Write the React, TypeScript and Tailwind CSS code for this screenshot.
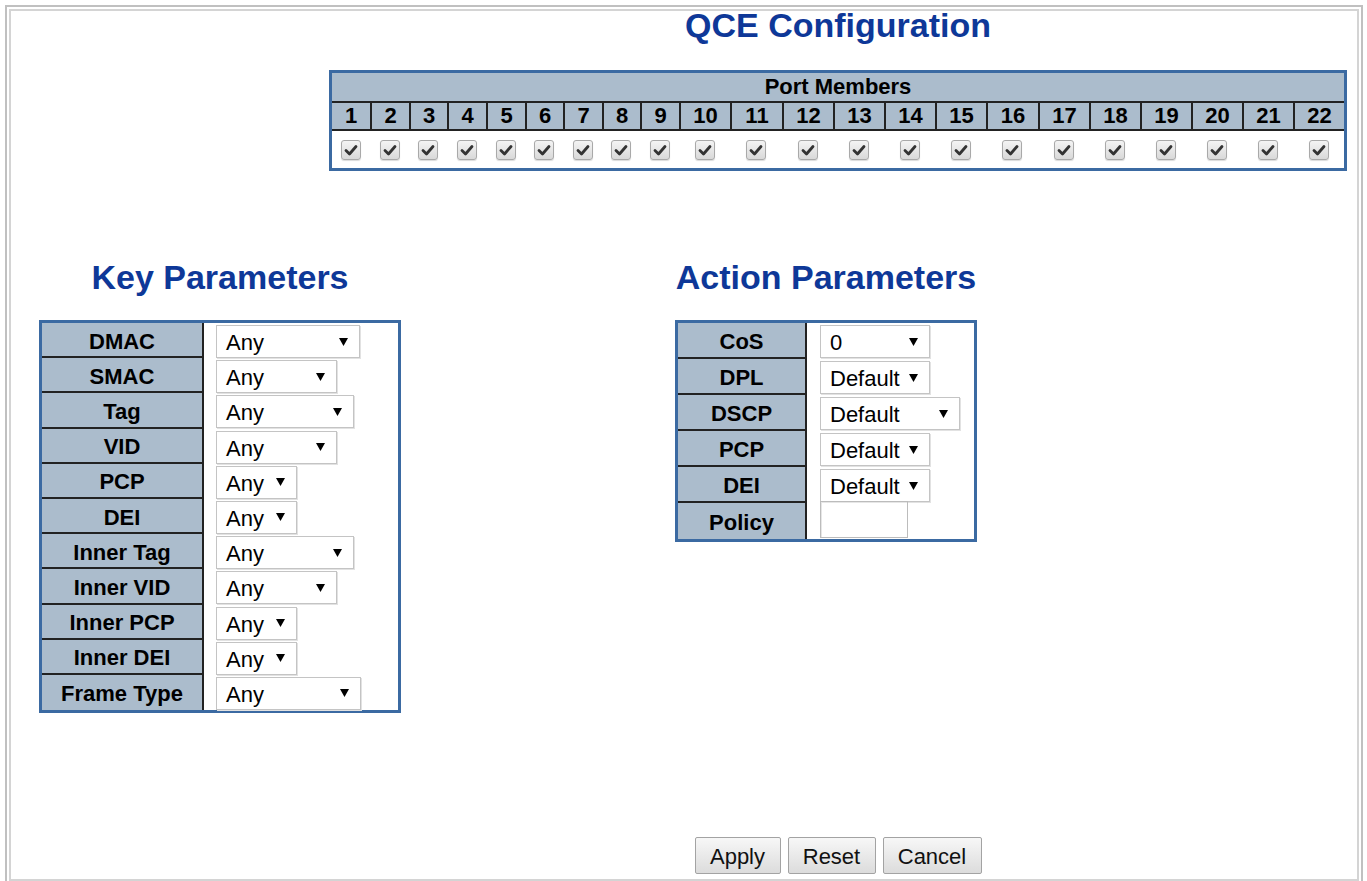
import React from "react";

const ports = Array.from({ length: 22 }, (_, i) => i + 1);

const keyRows: { label: string; w: string }[] = [
  { label: "DMAC", w: "w-[144px]" },
  { label: "SMAC", w: "w-[121px]" },
  { label: "Tag", w: "w-[138px]" },
  { label: "VID", w: "w-[121px]" },
  { label: "PCP", w: "w-[81px]" },
  { label: "DEI", w: "w-[81px]" },
  { label: "Inner Tag", w: "w-[138px]" },
  { label: "Inner VID", w: "w-[121px]" },
  { label: "Inner PCP", w: "w-[81px]" },
  { label: "Inner DEI", w: "w-[81px]" },
  { label: "Frame Type", w: "w-[145px]" },
];

const actionRows: { label: string; value: string; w: string }[] = [
  { label: "CoS", value: "0", w: "w-[110px]" },
  { label: "DPL", value: "Default", w: "w-[110px]" },
  { label: "DSCP", value: "Default", w: "w-[140px]" },
  { label: "PCP", value: "Default", w: "w-[110px]" },
  { label: "DEI", value: "Default", w: "w-[110px]" },
];

function Arrow() {
  return (
    <svg width="9" height="8" viewBox="0 0 9 8" className="shrink-0">
      <path d="M0 0 H9 L4.5 8 Z" fill="#000" />
    </svg>
  );
}

function Select({ value, w }: { value: string; w: string }) {
  return (
    <div
      className={`${w} h-[33px] mt-[2px] flex items-center justify-between pl-[9px] pr-[11px] pt-[3px] border border-[#c4c4c4] bg-white shadow-[1px_1px_0_#e2e2e2] text-[22px] text-black leading-none`}
    >
      <span>{value}</span>
      <span className="-mt-[3px]">
        <Arrow />
      </span>
    </div>
  );
}

function CheckBox() {
  return (
    <div className="w-[20px] h-[20px] rounded-[3px] border border-[#a9a9a9] bg-gradient-to-b from-[#f4f4f4] to-[#d9d9d9] flex items-center justify-center shadow-[0_1px_1px_rgba(0,0,0,0.15)]">
      <svg width="14" height="12" viewBox="0 0 14 12">
        <path d="M2 6.5 L5.5 10 L12 2.5" fill="none" stroke="#333" strokeWidth="2.8" strokeLinecap="round" strokeLinejoin="round" />
      </svg>
    </div>
  );
}

export default function App() {
  return (
    <div className="pt-[5px] pl-[5px] font-['Liberation_Sans',Arial,sans-serif] text-black">
      <div className="w-[1358px] h-[876px] border-[2px] border-b-0 border-[#c0c0c0] pt-[2px] px-[2px]">
        <div className="h-[872px] border-2 border-[#d4d4d4] bg-white flex flex-col">
          {/* Centered column (centre at x=838) */}
          <div className="pl-[308px] flex flex-col">
            <h1 className="self-center -mt-[5px] text-[34px] font-bold leading-[38px] text-[#0e3898] whitespace-nowrap">
              QCE Configuration
            </h1>

            {/* Port members */}
            <div className="self-center mt-[26px] w-[1018px] border-[3px] border-[#3b6aa2]">
              <div className="h-[28px] bg-[#abbccc] flex items-center justify-center text-[22px] font-bold leading-none">
                Port Members
              </div>
              <div className="grid grid-cols-[38px_39px_38px_39px_39px_38px_39px_38px_39px_51px_52px_51px_51px_51px_51px_52px_51px_51px_51px_51px_51px_51px_51px] h-[30px] border-y-2 border-[#222] bg-[#abbccc]">
                {ports.map((p) => (
                  <div
                    key={p}
                    className={`flex items-center justify-center text-[22px] font-bold leading-none ${p > 1 ? "border-l-2 border-[#222]" : ""}`}
                  >
                    {p}
                  </div>
                ))}
              </div>
              <div className="grid grid-cols-[38px_39px_38px_39px_39px_38px_39px_38px_39px_51px_52px_51px_51px_51px_51px_52px_51px_51px_51px_51px_51px_51px_51px] h-[37px] bg-white">
                {ports.map((p) => (
                  <div key={p} className="flex items-center justify-center">
                    <CheckBox />
                  </div>
                ))}
              </div>
            </div>
          </div>

          {/* Parameters */}
          <div className="mt-[87px] ml-[28px] flex items-start gap-[274px]">
            {/* Key */}
            <div className="w-[362px] flex flex-col">
              <h2 className="self-center text-[34px] font-bold leading-[38px] text-[#0e3898] whitespace-nowrap">
                Key Parameters
              </h2>
              <div className="mt-[24px] border-[3px] border-[#3b6aa2] flex flex-col">
                {keyRows.map((r, i) => (
                  <div key={r.label} className="flex h-[35.2px]">
                    <div
                      className={`w-[162px] shrink-0 bg-[#abbccc] border-r-2 border-[#222] flex items-center justify-center pt-[4px] text-[22px] font-bold leading-none ${i < keyRows.length - 1 ? "border-b-2" : ""}`}
                    >
                      {r.label}
                    </div>
                    <div className="pl-[12px]">
                      <Select value="Any" w={r.w} />
                    </div>
                  </div>
                ))}
              </div>
            </div>

            {/* Action */}
            <div className="w-[302px] flex flex-col">
              <h2 className="self-center text-[34px] font-bold leading-[38px] text-[#0e3898] whitespace-nowrap">
                Action Parameters
              </h2>
              <div className="mt-[24px] border-[3px] border-[#3b6aa2] flex flex-col">
                {actionRows.map((r) => (
                  <div key={r.label} className="flex h-[36px]">
                    <div className="w-[129px] shrink-0 bg-[#abbccc] border-r-2 border-b-2 border-[#222] flex items-center justify-center pt-[4px] text-[22px] font-bold leading-none">
                      {r.label}
                    </div>
                    <div className="pl-[13px]">
                      <Select value={r.value} w={r.w} />
                    </div>
                  </div>
                ))}
                <div className="flex h-[36px]">
                  <div className="w-[129px] shrink-0 bg-[#abbccc] border-r-2 border-[#222] flex items-center justify-center pt-[4px] text-[22px] font-bold leading-none">
                    Policy
                  </div>
                  <div className="pl-[13px]">
                    <div className="w-[88px] h-[37px] -mt-[2px] border border-[#bcbcbc] bg-white shadow-[inset_1px_1px_0_#e6e6e6]" />
                  </div>
                </div>
              </div>
            </div>
          </div>

          {/* Buttons */}
          <div className="pl-[308px] flex flex-col">
            <div className="self-center mt-[124px] flex gap-[7px]">
              {[
                { t: "Apply", w: "w-[86px]" },
                { t: "Reset", w: "w-[88px]" },
                { t: "Cancel", w: "w-[99px]" },
              ].map((b) => (
                <button
                  key={b.t}
                  className={`${b.w} h-[37px] rounded-[2px] border border-[#a3a3a3] bg-gradient-to-b from-[#f7f7f7] to-[#dcdcdc] text-[22px] text-[#111] leading-none pt-[2px]`}
                >
                  {b.t}
                </button>
              ))}
            </div>
          </div>
        </div>
      </div>
    </div>
  );
}
